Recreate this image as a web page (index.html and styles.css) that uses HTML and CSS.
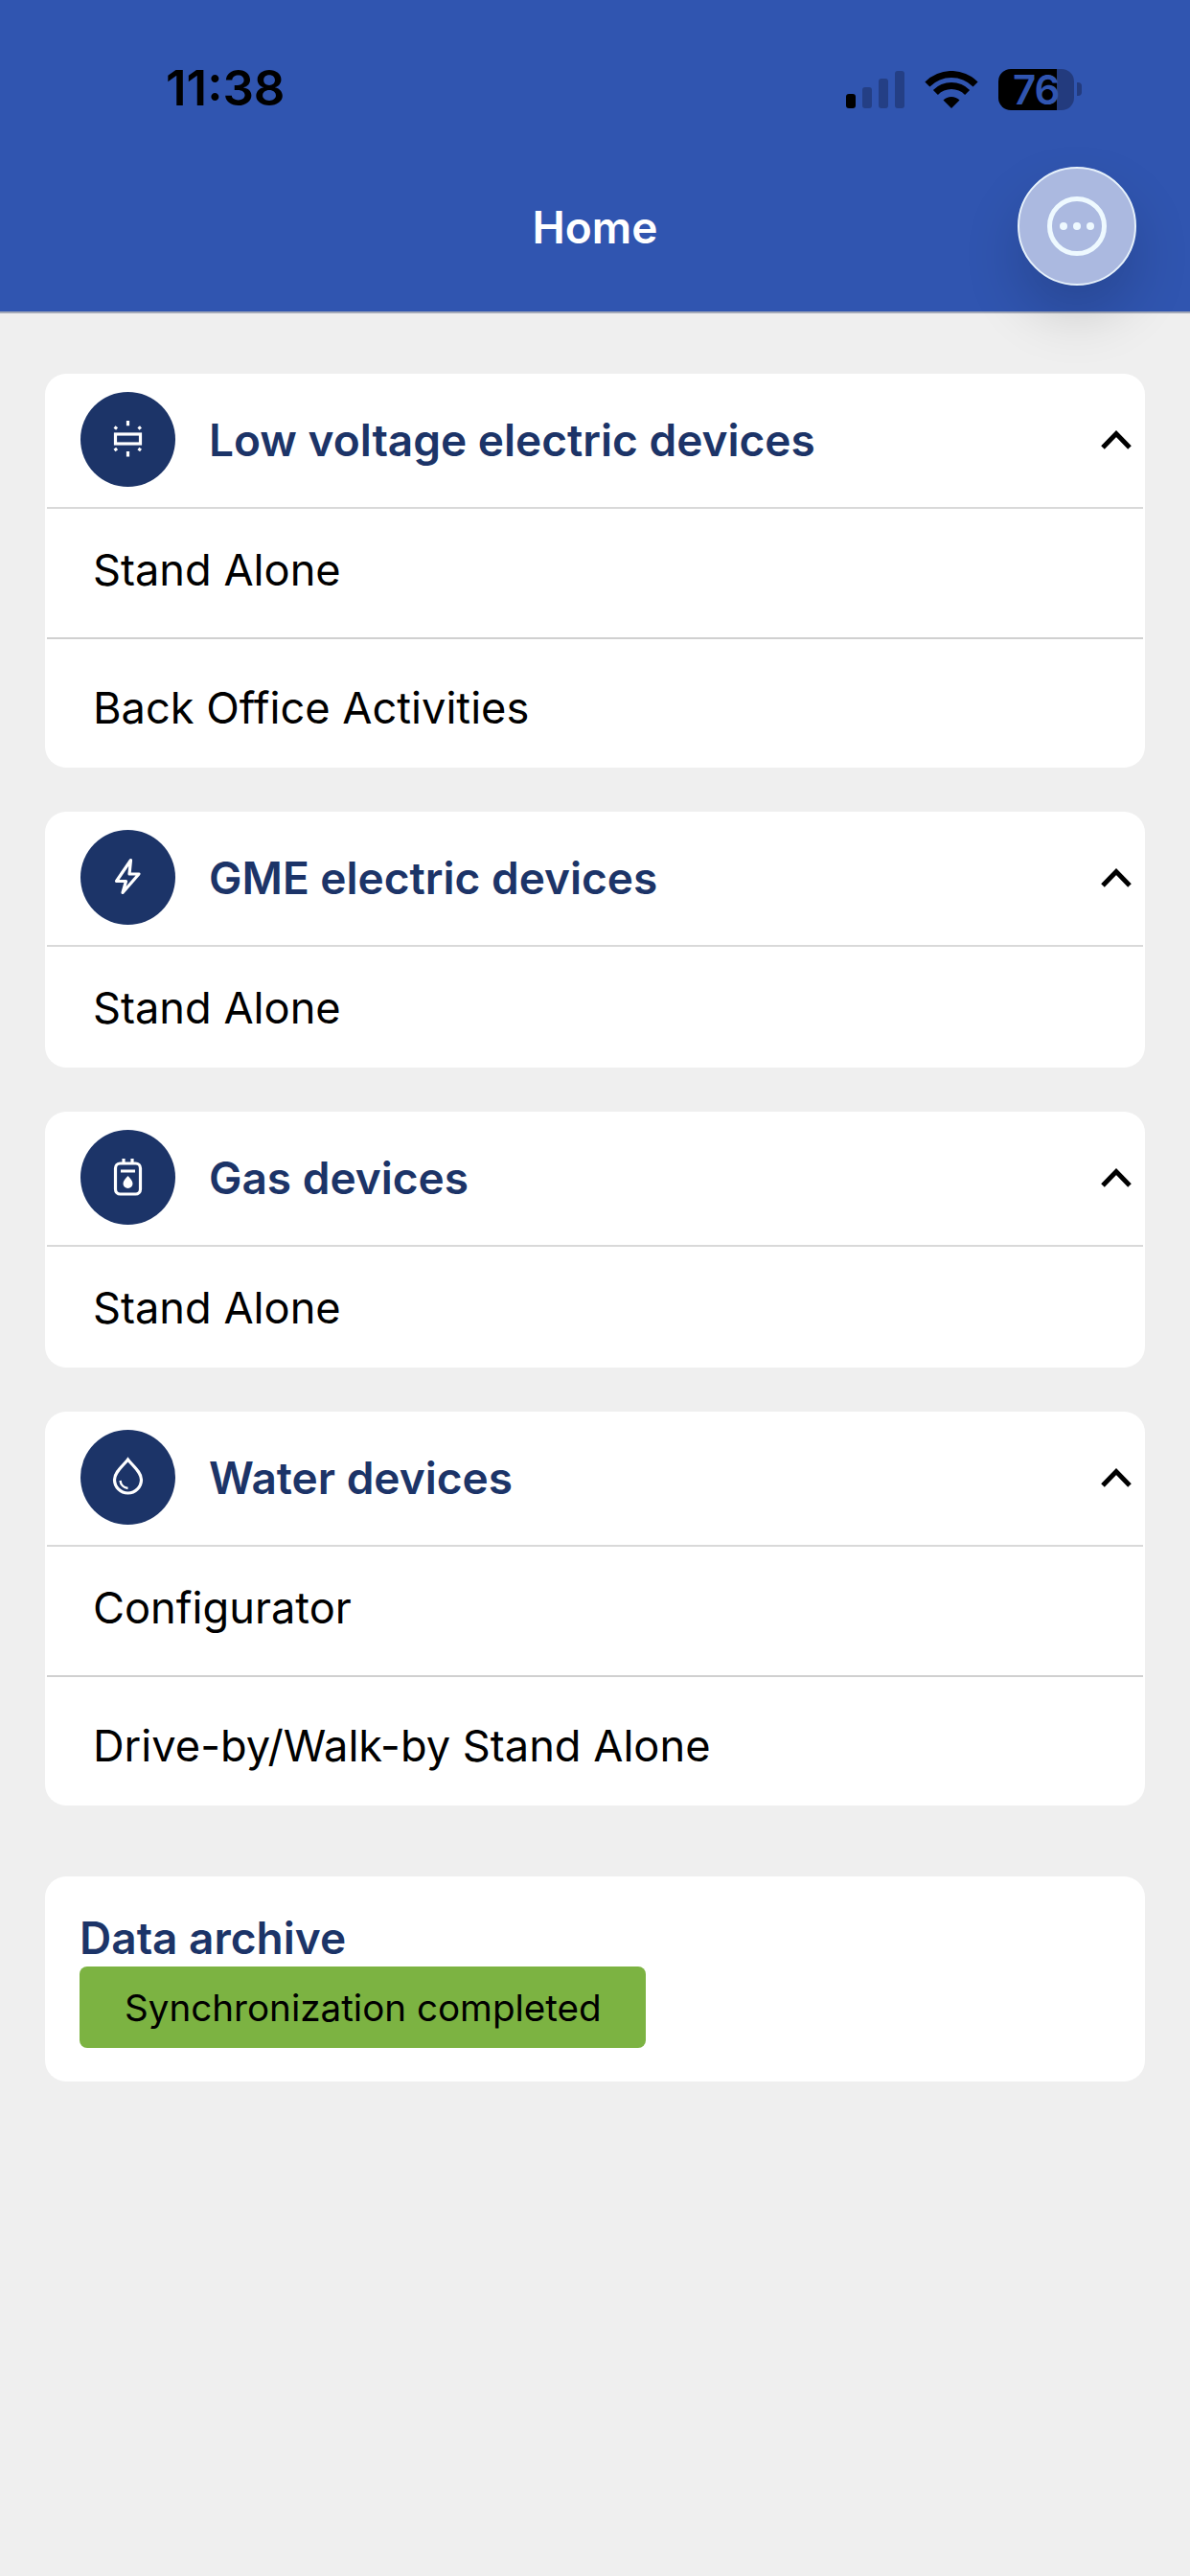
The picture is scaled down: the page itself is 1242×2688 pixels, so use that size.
FILE: index.html
```html
<!DOCTYPE html>
<html lang="en">
<head>
    <meta charset="UTF-8">
    <meta name="viewport" content="width=device-width, initial-scale=1.0">
    <title>Home</title>
    <link rel="stylesheet" href="styles.css">
</head>
<body>
    <header class="topbar">
        <div class="status">
            <span class="time">11:38</span>
            <div class="status-icons">
                <div class="signal">
                    <span class="bar bar-1"></span>
                    <span class="bar bar-2 dim"></span>
                    <span class="bar bar-3 dim"></span>
                    <span class="bar bar-4 dim"></span>
                </div>
                <svg class="wifi" width="56" height="39" viewBox="-1 0 56 39">
                    <path d="M-.6 11.4A39 39 0 0 1 54.6 11.4L49.6 16.4A32 32 0 0 0 4.4 16.4Z"/>
                    <path d="M7.9 19.9A27 27 0 0 1 46.1 19.9L41.1 24.9A20 20 0 0 0 12.9 24.9Z"/>
                    <path d="M18.5 30.5A12 12 0 0 1 35.5 30.5L27 39Z"/>
                </svg>
                <div class="battery">
                    <div class="battery-body">76</div>
                    <span class="battery-tip"></span>
                </div>
            </div>
        </div>
        <h1 class="title">Home</h1>
        <button class="menu-btn" type="button">
            <svg width="68" height="68" viewBox="0 0 68 68">
                <circle cx="34" cy="34" r="28.5" fill="none" stroke="#eef9ff" stroke-width="5"/>
                <circle cx="20" cy="34" r="4" fill="#eef9ff"/>
                <circle cx="34" cy="34" r="4" fill="#eef9ff"/>
                <circle cx="48" cy="34" r="4" fill="#eef9ff"/>
            </svg>
        </button>
    </header>

    <main class="content">
        <section class="card">
            <div class="card-head">
                <svg class="round-icon" width="99" height="99" viewBox="0 0 99 99">
                    <circle cx="49.5" cy="49.5" r="49.5" fill="#1c3468"/>
                    <g fill="none" stroke="#fff" stroke-width="3.2">
                        <rect x="36.5" y="44" width="26" height="10"/>
                        <path d="M49.5 30v5.3M49.5 62v5.5"/>
                        <path d="M35.5 36.6l2.6 2M63 36.6l-2.6 2M35.5 61l2.6-2M63 61l-2.6-2"/>
                    </g>
                </svg>
                <h2 class="card-title">Low voltage electric devices</h2>
                <svg class="chevron" width="34" height="23" viewBox="0 0 34 23"><path d="M3 20L17 5.500L31 20"/></svg>
            </div>
            <div class="row">Stand Alone</div>
            <div class="row">Back Office Activities</div>
        </section>

        <section class="card">
            <div class="card-head">
                <svg class="round-icon" width="99" height="99" viewBox="0 0 99 99">
                    <circle cx="49.5" cy="49.5" r="49.5" fill="#1c3468"/>
                    <path d="M52.500 31.500L37.500 53.500H47.500L44 65.500L61 46H51Z" fill="none" stroke="#fff" stroke-width="3.200" stroke-linejoin="round"/>
                </svg>
                <h2 class="card-title">GME electric devices</h2>
                <svg class="chevron" width="34" height="23" viewBox="0 0 34 23"><path d="M3 20L17 5.500L31 20"/></svg>
            </div>
            <div class="row">Stand Alone</div>
        </section>

        <section class="card">
            <div class="card-head">
                <svg class="round-icon" width="99" height="99" viewBox="0 0 99 99">
                    <circle cx="49.5" cy="49.5" r="49.5" fill="#1c3468"/>
                    <rect x="36.500" y="35" width="26" height="32" rx="5" fill="none" stroke="#fff" stroke-width="3.200"/>
                    <path d="M45 30v5M54 30v5M42 43h15" fill="none" stroke="#fff" stroke-width="3.200"/>
                    <path d="M49.500 48c2.500 3 5 5 5 8a5 5 0 0 1-10 0c0-3 2.500-5 5-8Z" fill="#fff"/>
                </svg>
                <h2 class="card-title">Gas devices</h2>
                <svg class="chevron" width="34" height="23" viewBox="0 0 34 23"><path d="M3 20L17 5.500L31 20"/></svg>
            </div>
            <div class="row">Stand Alone</div>
        </section>

        <section class="card">
            <div class="card-head">
                <svg class="round-icon" width="99" height="99" viewBox="0 0 99 99">
                    <circle cx="49.5" cy="49.5" r="49.5" fill="#1c3468"/>
                    <path d="M49.500 31C45 37 35.500 44 35.500 52a14 14 0 0 0 28 0C63.500 44 54 37 49.500 31Z" fill="none" stroke="#fff" stroke-width="3.200"/>
                    <path d="M41.500 53a9 9 0 0 0 8 8" fill="none" stroke="#fff" stroke-width="2.400"/>
                </svg>
                <h2 class="card-title">Water devices</h2>
                <svg class="chevron" width="34" height="23" viewBox="0 0 34 23"><path d="M3 20L17 5.500L31 20"/></svg>
            </div>
            <div class="row">Configurator</div>
            <div class="row">Drive-by/Walk-by Stand Alone</div>
        </section>

        <section class="card archive">
            <h2 class="card-title">Data archive</h2>
            <div class="sync-badge">Synchronization completed</div>
        </section>
    </main>
</body>
</html>
```

FILE: styles.css
```css
* { box-sizing: border-box; }
body { margin: 0; min-height: 2688px; background-color: #efefef; font-family: Inter, "Liberation Sans", sans-serif; color: #000; }

.topbar { position: relative; height: 327px; background-color: #3055b0; border-bottom: 2px solid #a3a9b8; }
.status { display: flex; align-items: center; justify-content: space-between; height: 60px; padding: 0 113px 0 173px; position: relative; top: 62px; }
.time { font-size: 51px; font-weight: 600; line-height: 60px; }
.status-icons { display: flex; align-items: flex-end; }
.signal { display: flex; align-items: flex-end; gap: 7px; height: 39px; margin-right: 21px; }
.bar { display: block; width: 10px; border-radius: 3px; background-color: #000; }
.bar.dim { background-color: #243f85; }
.bar-1 { height: 15px; }
.bar-2 { height: 22px; }
.bar-3 { height: 31px; }
.bar-4 { height: 39px; }
.wifi { display: block; fill: #000; margin-right: 21px; }
.battery { display: flex; align-items: center; margin-bottom: -2px; }
.battery-body { width: 79px; height: 43px; border-radius: 13px; background: linear-gradient(90deg, #000 77%, #233b7e 77%); color: #3055b0; font-size: 42px; font-weight: 600; line-height: 43px; padding-left: 15px; letter-spacing: -1px; }
.battery-tip { width: 5px; height: 14px; margin-left: 3px; border-radius: 0 4px 4px 0; background-color: #233b7e; }

.title { margin: 0; padding-top: 149px; text-align: center; color: #fff; font-size: 46px; font-weight: 600; line-height: 56px; }
.menu-btn { position: absolute; left: 1062px; top: 174px; display: flex; align-items: center; justify-content: center; width: 124px; height: 124px; padding: 0; border: 2px solid #e6f1fb; border-radius: 50%; background-color: #abb9e0; box-shadow: 0 30px 60px rgba(0, 0, 0, 0.16); }

.content { display: flex; flex-direction: column; gap: 46px; padding: 63px 47px 0; }
.card { background-color: #fff; border-radius: 22px; overflow: hidden; }
.card-head { display: flex; align-items: center; height: 141px; padding: 0 11px 2px 37px; border-bottom: 2px solid #d9d9d9; margin: 0 2px; }
.round-icon { display: block; flex: none; margin-right: 35px; margin-left: -2px; }
.card-title { flex: 1; margin: 0; color: #1c3468; font-size: 46px; font-weight: 600; line-height: 56px; }
.chevron { display: block; flex: none; fill: none; stroke: #000; stroke-width: 5; }
.row { display: flex; align-items: center; height: 126px; padding-left: 50px; font-size: 45.2px; }
.row + .row { height: 136px; margin: 8px 2px 0; padding: 8px 0 0 48px; border-top: 2px solid #d0d0d0; }

.archive { margin-top: 28px; padding: 36px 36px 35px; }
.sync-badge { display: flex; align-items: center; width: 591px; height: 85px; margin-top: 2px; padding-left: 47px; border-radius: 8px; background-color: #7cb342; font-size: 38.6px; }
```
